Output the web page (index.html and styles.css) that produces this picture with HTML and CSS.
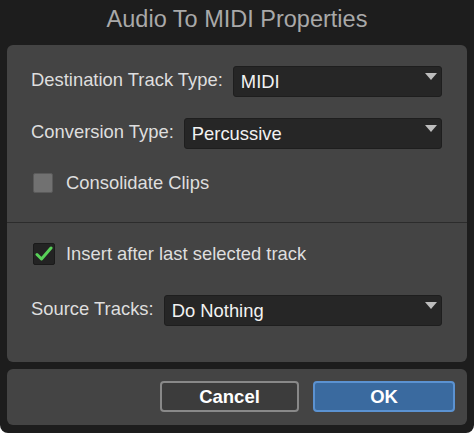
FILE: index.html
```html
<!DOCTYPE html>
<html lang="en">
<head>
    <meta charset="UTF-8">
    <meta name="viewport" content="width=device-width, initial-scale=1.0">
    <title>Audio To MIDI Properties</title>
    <link rel="stylesheet" href="styles.css">
</head>
<body>
    <div class="dialog">
        <h1 class="title">Audio To MIDI Properties</h1>

        <div class="panel">
            <div class="section top-section">
                <div class="row">
                    <span class="label">Destination Track Type:</span>
                    <div class="select">
                        <span class="value">MIDI</span>
                        <svg class="arrow" width="12" height="7" viewBox="0 0 12 7"><path d="M0 0 H12 L6 7 Z"/></svg>
                    </div>
                </div>
                <div class="row row-gap">
                    <span class="label">Conversion Type:</span>
                    <div class="select">
                        <span class="value">Percussive</span>
                        <svg class="arrow" width="12" height="7" viewBox="0 0 12 7"><path d="M0 0 H12 L6 7 Z"/></svg>
                    </div>
                </div>
                <div class="check-row consolidate">
                    <span class="box-cell"><span class="box"></span></span>
                    <span class="check-label">Consolidate Clips</span>
                </div>
            </div>

            <div class="section bottom-section">
                <div class="check-row">
                    <span class="box-cell">
                        <span class="box checked">
                            <svg width="18" height="16" viewBox="0 0 18 16"><path d="M2 8.5 L6.5 13 L16 2"/></svg>
                        </span>
                    </span>
                    <span class="check-label">Insert after last selected track</span>
                </div>
                <div class="row source-row">
                    <span class="label">Source Tracks:</span>
                    <div class="select">
                        <span class="value">Do Nothing</span>
                        <svg class="arrow" width="12" height="7" viewBox="0 0 12 7"><path d="M0 0 H12 L6 7 Z"/></svg>
                    </div>
                </div>
            </div>
        </div>

        <div class="panel buttons">
            <button type="button" class="btn cancel">Cancel</button>
            <button type="button" class="btn ok">OK</button>
        </div>
    </div>
</body>
</html>
```

FILE: styles.css
```css
body {
    margin: 0;
    background-color: #ffffff;
    font-family: "Liberation Sans", Arial, sans-serif;
}

.dialog {
    width: 474px;
    height: 433px;
    box-sizing: border-box;
    background-color: #1d1d1d;
    padding: 0 7px 7px 7px;
    border-radius: 0 0 8px 8px;
    display: flex;
    flex-direction: column;
    gap: 7px;
}

.title {
    margin: 0;
    height: 38px;
    line-height: 38px;
    text-align: center;
    font-size: 23.5px;
    font-weight: normal;
    color: #a9a9a9;
}

.panel {
    background-color: #444444;
    border-radius: 6px;
}

.section {
    padding: 0 25px 0 24px;
}

.top-section {
    padding-top: 21px;
    padding-bottom: 29px;
    border-bottom: 1px solid #2c2c2c;
}

.bottom-section {
    padding-top: 20px;
    padding-bottom: 36px;
}

.row {
    display: flex;
    align-items: center;
    gap: 10px;
    height: 31px;
}

.row-gap {
    margin-top: 21px;
}

.source-row {
    margin-top: 30px;
}

.label {
    font-size: 18.4px;
    color: #dedede;
    white-space: nowrap;
    margin-bottom: 3px;
}

.select {
    flex: 1;
    height: 31px;
    box-sizing: border-box;
    display: flex;
    background-color: #262626;
    border: 1px solid #1e1e1e;
    border-radius: 3px;
    padding: 0 4px 0 7px;
}

.value {
    flex: 1;
    font-size: 18.4px;
    line-height: 29px;
    color: #f2f2f2;
}

.arrow {
    margin-top: 6px;
    fill: #bdbdbd;
}

.check-row {
    display: flex;
    align-items: center;
    height: 22px;
}

.consolidate {
    margin-top: 24px;
    height: 20px;
}

.box-cell {
    width: 33px;
    display: flex;
    padding-left: 2px;
}

.box {
    width: 20px;
    height: 20px;
    box-sizing: border-box;
    background-color: #717171;
    border: 1px solid #5a5a5a;
    border-radius: 2px;
}

.box.checked {
    width: 22px;
    height: 22px;
    background-color: #232323;
    border-color: #1a1a1a;
    display: flex;
    align-items: center;
    justify-content: center;
}

.box.checked svg path {
    fill: none;
    stroke: #58d158;
    stroke-width: 3;
    stroke-linecap: round;
    stroke-linejoin: round;
}

.check-label {
    font-size: 18.4px;
    color: #dedede;
}

.buttons {
    height: 56px;
    box-sizing: border-box;
    display: flex;
    justify-content: flex-end;
    align-items: center;
    gap: 14px;
    padding: 0 12px 1px 0;
}

.btn {
    height: 31px;
    font-family: "Liberation Sans", Arial, sans-serif;
    font-size: 18.5px;
    font-weight: bold;
    color: #ffffff;
    border-radius: 4px;
    cursor: pointer;
}

.cancel {
    width: 139px;
    background-color: #3c3c3c;
    border: 2px solid #898989;
}

.ok {
    width: 142px;
    background-color: #3a6a9f;
    border: 2px solid #5b92d1;
}
```
